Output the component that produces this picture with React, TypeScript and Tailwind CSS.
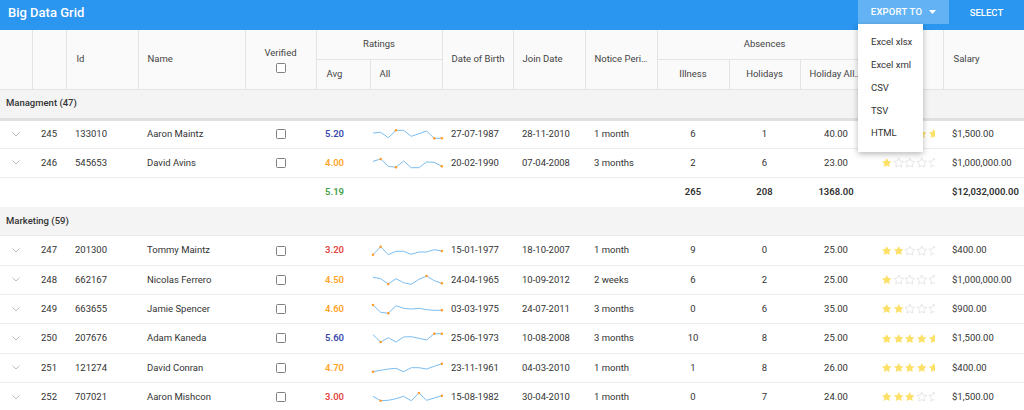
import React from 'react'

type Row = {
  no: number
  id: string
  name: string
  avg: string
  avgColor: string
  spark: number[]
  dots: number[]
  dob: string
  join: string
  notice: string
  illness: number
  holidays: number
  allowance: string
  stars: number
  salary: string
}

const BLUE = 'text-[#3949ab]'
const ORANGE = 'text-[#ffa42b]'
const RED = 'text-[#e2463f]'

const managment: Row[] = [
  { no: 245, id: '133010', name: 'Aaron Maintz', avg: '5.20', avgColor: BLUE, spark: [5, 4.3, 9.7, 2.3, 2.3, 8.3, 5.7, 3, 10.3, 10.3], dots: [3, 8, 9], dob: '27-07-1987', join: '28-11-2010', notice: '1 month', illness: 6, holidays: 1, allowance: '40.00', stars: 5, salary: '$1,500.00' },
  { no: 246, id: '545653', name: 'David Avins', avg: '4.00', avgColor: ORANGE, spark: [4.3, 2, 9.3, 10.3, 4, 10.7, 10.7, 5, 5.3, 9.3], dots: [1, 3, 9], dob: '20-02-1990', join: '07-04-2008', notice: '3 months', illness: 2, holidays: 6, allowance: '23.00', stars: 1, salary: '$1,000,000.00' },
]

const marketing: Row[] = [
  { no: 247, id: '201300', name: 'Tommy Maintz', avg: '3.20', avgColor: RED, spark: [9.7, 1.7, 9.7, 6.3, 6.3, 9.3, 7, 7, 4.7, 6], dots: [0, 1, 9], dob: '15-01-1977', join: '18-10-2007', notice: '1 month', illness: 9, holidays: 0, allowance: '25.00', stars: 2, salary: '$400.00' },
  { no: 248, id: '662167', name: 'Nicolas Ferrero', avg: '4.50', avgColor: ORANGE, spark: [3.3, 4.7, 10, 4.7, 8.7, 10.3, 5.3, 2, 6.7, 9.3], dots: [2, 7, 9], dob: '24-04-1965', join: '10-09-2012', notice: '2 weeks', illness: 6, holidays: 2, allowance: '25.00', stars: 1, salary: '$1,000,000.00' },
  { no: 249, id: '663655', name: 'Jamie Spencer', avg: '4.60', avgColor: ORANGE, spark: [2, 9.3, 10.3, 2.7, 5.3, 6, 5.3, 6.7, 7.3, 7.3], dots: [0, 2, 9], dob: '03-03-1975', join: '24-07-2011', notice: '3 months', illness: 0, holidays: 6, allowance: '35.00', stars: 2, salary: '$900.00' },
  { no: 250, id: '207676', name: 'Adam Kaneda', avg: '5.60', avgColor: BLUE, spark: [2.7, 10, 5.7, 10, 5, 4.7, 6.3, 8, 1.7, 1.7], dots: [1, 8, 9], dob: '25-06-1973', join: '10-08-2008', notice: '3 months', illness: 10, holidays: 8, allowance: '25.00', stars: 5, salary: '$1,500.00' },
  { no: 251, id: '121274', name: 'David Conran', avg: '4.70', avgColor: ORANGE, spark: [9.7, 8.3, 7, 6.3, 9.7, 5.7, 5.7, 7, 4.3, 1.7], dots: [0, 9], dob: '23-11-1961', join: '04-03-2010', notice: '1 month', illness: 1, holidays: 8, allowance: '26.00', stars: 5, salary: '$400.00' },
  { no: 252, id: '707021', name: 'Aaron Mishcon', avg: '3.00', avgColor: RED, spark: [5.3, 9.7, 9.3, 7.7, 5.3, 9.7, 2, 9.3, 7, 4.7], dots: [1, 6, 9], dob: '15-08-1982', join: '30-04-2010', notice: '1 month', illness: 0, holidays: 7, allowance: '24.00', stars: 3, salary: '$1,500.00' },
]

const STAR = 'M12 2l3.09 6.26L22 9.27l-5 4.87 1.18 6.88L12 17.77l-6.18 3.25L7 14.14 2 9.27l6.91-1.01L12 2z'

function Sparkline({ values, dots }: { values: number[]; dots: number[] }) {
  const pts = values.map((y, i) => [1 + i * 7.65, y] as const)
  return (
    <svg width="72" height="12" viewBox="0 0 72 12" className="block overflow-visible">
      <polyline
        points={pts.map(p => p.join(',')).join(' ')}
        fill="none"
        stroke="#7cbdf0"
        strokeWidth="1"
      />
      {dots.map(i => (
        <circle key={i} cx={pts[i][0]} cy={pts[i][1]} r="1.3" fill="#ff9d2e" />
      ))}
    </svg>
  )
}

function Stars({ count }: { count: number }) {
  return (
    <div className="flex gap-[0.2px] w-[54px] overflow-hidden">
      {[0, 1, 2, 3, 4].map(i => (
        <svg key={i} width="11.5" height="11.5" viewBox="0 0 24 24" className="shrink-0">
          {i < count ? (
            <path d={STAR} fill="#fde067" />
          ) : (
            <path d={STAR} fill="none" stroke="#dcdcdc" strokeWidth="1.5" />
          )}
        </svg>
      ))}
    </div>
  )
}

function Checkbox() {
  return <div className="mx-auto w-[10px] h-[10px] border border-[#808080] rounded-[1.5px] bg-white" />
}

function Chevron() {
  return (
    <svg width="8" height="5" viewBox="0 0 8 5" className="mx-auto block">
      <polyline points="0.5,0.5 4,4 7.5,0.5" fill="none" stroke="#b5b5b5" strokeWidth="0.9" />
    </svg>
  )
}

const td = 'px-[9px] whitespace-nowrap overflow-hidden'
const th = 'border-r border-b border-[#e4e4e4] font-normal text-[#444] whitespace-nowrap overflow-hidden text-ellipsis'

function DataRow({ r }: { r: Row }) {
  return (
    <tr className="h-[29.3px] bg-white border-b border-[#ececec] text-[#333]">
      <td><Chevron /></td>
      <td className="text-center">{r.no}</td>
      <td className={td}>{r.id}</td>
      <td className={td}>{r.name}</td>
      <td><Checkbox /></td>
      <td className={`${td} font-semibold ${r.avgColor}`}>{r.avg}</td>
      <td className="pl-[2px]"><Sparkline values={r.spark} dots={r.dots} /></td>
      <td className={td}>{r.dob}</td>
      <td className={td}>{r.join}</td>
      <td className={td}>{r.notice}</td>
      <td className="text-center">{r.illness}</td>
      <td className="text-center">{r.holidays}</td>
      <td className="text-center">{r.allowance}</td>
      <td className="pl-[9px]"><Stars count={r.stars} /></td>
      <td className={td}>{r.salary}</td>
    </tr>
  )
}

function GroupRow({ label, first }: { label: string; first?: boolean }) {
  return (
    <tr className={`bg-[#f4f4f4] ${first ? 'h-[30px] border-b-[3px] border-[#e0e0e0]' : 'h-[29.3px] border-b border-[#ececec]'}`}>
      <td colSpan={15} className="px-[6px] font-medium text-[#333]">{label}</td>
    </tr>
  )
}

export default function App() {
  return (
    <div className="relative w-[1024px] h-[410px] overflow-hidden bg-white font-['Roboto',sans-serif] text-[9.5px]">
      {/* Toolbar */}
      <div className="h-[30px] bg-[#2a96ef] flex items-start">
        <div className="h-[26px] flex items-center pl-[8px] text-white text-[13px] font-medium">Big Data Grid</div>
        <div className="ml-auto flex items-start">
          <div className="h-[24px] w-[91px] bg-[#63b3f4] flex items-center justify-center gap-[7px] text-white font-medium tracking-[0.2px]">
            EXPORT TO
            <svg width="7" height="4" viewBox="0 0 7 4"><path d="M0 0h7L3.5 4z" fill="#fff" /></svg>
          </div>
          <div className="h-[26px] w-[75px] flex items-center justify-center text-white font-medium">SELECT</div>
        </div>
      </div>

      <table className="table-fixed border-collapse w-[1024px]">
        <colgroup>
          <col className="w-[32px]" />
          <col className="w-[34px]" />
          <col className="w-[72px]" />
          <col className="w-[107px]" />
          <col className="w-[71px]" />
          <col className="w-[54px]" />
          <col className="w-[72px]" />
          <col className="w-[71px]" />
          <col className="w-[72px]" />
          <col className="w-[72px]" />
          <col className="w-[72px]" />
          <col className="w-[71px]" />
          <col className="w-[72px]" />
          <col className="w-[71px]" />
          <col className="w-[81px]" />
        </colgroup>
        <thead className="bg-[#fafafa]">
          <tr className="h-[29.5px]">
            <th rowSpan={2} className={th} />
            <th rowSpan={2} className={th} />
            <th rowSpan={2} className={`${th} text-left px-[10px]`}>Id</th>
            <th rowSpan={2} className={`${th} text-left px-[9px]`}>Name</th>
            <th rowSpan={2} className={th}>
              <div className="mb-[3px]">Verified</div>
              <Checkbox />
            </th>
            <th colSpan={2} className={th}>Ratings</th>
            <th rowSpan={2} className={`${th} text-left pl-[9px] pr-[4px]`}>Date of Birth</th>
            <th rowSpan={2} className={`${th} text-left px-[9px]`}>Join Date</th>
            <th rowSpan={2} className={`${th} text-left px-[9px]`}>Notice Period</th>
            <th colSpan={3} className={th}>Absences</th>
            <th rowSpan={2} className={th} />
            <th rowSpan={2} className={`${th} text-left px-[10px] border-r-0`}>Salary</th>
          </tr>
          <tr className="h-[29.5px]">
            <th className={`${th} text-left px-[10px]`}>Avg</th>
            <th className={`${th} text-left px-[9px]`}>All</th>
            <th className={th}>Illness</th>
            <th className={th}>Holidays</th>
            <th className={`${th} px-[9px]`}>Holiday Allowance</th>
          </tr>
        </thead>
        <tbody>
          <GroupRow label="Managment (47)" first />
          {managment.map(r => <DataRow key={r.no} r={r} />)}
          <tr className="h-[29px] bg-white font-semibold text-[#2f2f2f]">
            <td colSpan={5} />
            <td className={`${td} text-[#43a047]`}>5.19</td>
            <td colSpan={4} />
            <td className="text-center">265</td>
            <td className="text-center">208</td>
            <td className="text-center">1368.00</td>
            <td />
            <td className={td}>$12,032,000.00</td>
          </tr>
          <GroupRow label="Marketing (59)" />
          {marketing.map(r => <DataRow key={r.no} r={r} />)}
        </tbody>
      </table>

      {/* Export menu */}
      <div className="absolute left-[858px] top-[24px] w-[65px] bg-white py-[7px] shadow-[0_2px_6px_rgba(0,0,0,0.28)] text-[#333]">
        {['Excel xlsx', 'Excel xml', 'CSV', 'TSV', 'HTML'].map(label => (
          <div key={label} className="h-[22.8px] flex items-center pl-[13px] whitespace-nowrap">{label}</div>
        ))}
      </div>
    </div>
  )
}
